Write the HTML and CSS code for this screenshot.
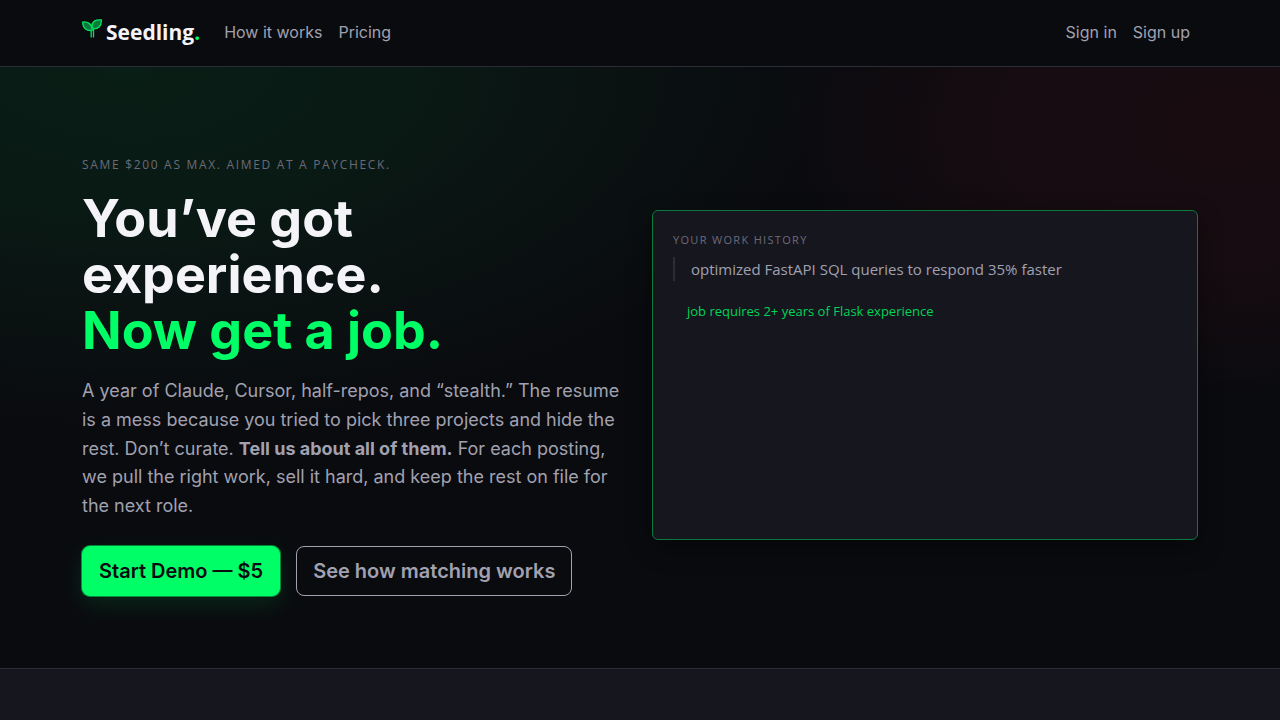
FILE: index.html
```
<!DOCTYPE html>
<html lang="en">
<head>
	<meta charset="UTF-8">
	<meta name="viewport" content="width=device-width, initial-scale=1">
	<title>Seedling</title>
	<link rel="stylesheet" href="styles.css">
</head>
<body>

<header class="navbar">
	<nav class="container nav-inner">
		<a class="brand" href="#">
			<svg class="brand-icon" width="20" height="20" viewBox="0 0 20 20" aria-hidden="true">
				<path d="M9.2 18.500V10M11.500 18.500V9" fill="none" stroke="#00e45c" stroke-width="1.3"/>
				<path d="M.7 3.100C5.400 2.300 10 4.600 10.200 11.300C5 12.300.600 9.400.700 3.100Z" fill="#0b7a3e" stroke="#00e45c" stroke-width="1.3"/>
				<path d="M19.300.9C13.600.200 9.800 2.800 10 7.200L11.300 9.900C16.300 10.300 19.700 6.800 19.300.9Z" fill="#0b7a3e" stroke="#00e45c" stroke-width="1.3"/>
			</svg>
			<span>Seedling<span class="dot">.</span></span>
		</a>
		<a class="nav-link" href="#how">How it works</a>
		<a class="nav-link" href="#pricing">Pricing</a>
		<div class="nav-right">
			<a class="nav-link" href="#signin">Sign in</a>
			<a class="nav-link" href="#signup">Sign up</a>
		</div>
	</nav>
</header>

<main>
	<section class="hero">
		<div class="container hero-grid">
			<div>
				<p class="eyebrow">Same $200 as Max. Aimed at a paycheck.</p>
				<h1>You’ve got experience. <span class="accent">Now get a job.</span></h1>
				<p class="lead">A year of Claude, Cursor, half-repos, and “stealth.” The resume is a mess because you tried to pick three projects and hide the rest. Don’t curate. <strong>Tell us about all of them.</strong> For each posting, we pull the right work, sell it hard, and keep the rest on file for the next role.</p>
				<div class="actions">
					<a class="btn btn-primary" href="#demo">Start Demo — $5</a>
					<a class="btn btn-outline" href="#how">See how matching works</a>
				</div>
			</div>
			<div class="match-card">
				<p class="card-label">Your work history</p>
				<blockquote>optimized FastAPI SQL queries to respond 35% faster</blockquote>
				<p class="requirement">job requires 2+ years of Flask experience</p>
			</div>
		</div>
	</section>
	<section class="band" id="how"></section>
</main>

</body>
</html>
```

FILE: styles.css
```
:root {
	--bg: #0a0b0f;
	--panel: #16161f;
	--line: #2a2d35;
	--text: #f4f4f8;
	--muted: #a1a1b0;
	--dim: #6b6b78;
	--green: #00ff66;
}

* {box-sizing: border-box;}

body {
	margin: 0;
	min-height: 100vh;
	display: flex;
	flex-direction: column;
	background: var(--bg);
	color: var(--muted);
	font-family: Inter, sans-serif;
	font-size: 16px;
	line-height: 24px;
}

p, h1, blockquote {margin: 0;}
a {text-decoration: none;}
main {flex: 1; display: flex; flex-direction: column;}

.container {
	width: 100%;
	max-width: 1140px;
	margin: 0 auto;
	padding: 0 12px;
}

/* top bar */
.navbar {border-bottom: 1px solid var(--line);}
.nav-inner {display: flex; align-items: center; gap: 16px; padding-top: 17px; padding-bottom: 19px;}
.brand {
	display: flex;
	align-items: center;
	gap: 4px;
	margin-right: 8px;
	color: var(--text);
	font: 700 21px/30px "Open Sans", sans-serif;
}
.brand-icon {margin-bottom: 6px;}
.dot, .accent {color: var(--green);}
.nav-link {color: var(--muted);}
.nav-right {display: flex; gap: 16px; margin-left: auto; padding-right: 8px;}

/* hero */
.hero {
	padding: 87px 0 72px;
	background:
		radial-gradient(ellipse 55% 60% at 10% 0%, rgba(0, 255, 102, 0.08), rgba(0, 255, 102, 0.06) 40%, transparent),
		radial-gradient(ellipse 35% 45% at 96% 10%, rgba(255, 30, 50, 0.06), rgba(255, 30, 50, 0.05) 50%, transparent);
}
.hero-grid {
	display: grid;
	grid-template-columns: 1fr 1fr;
	gap: 24px;
	align-items: center;
}
.eyebrow, .card-label {
	color: var(--dim);
	font-family: "Open Sans", sans-serif;
	text-transform: uppercase;
}
.eyebrow {font-size: 12px; line-height: 21px; letter-spacing: 0.14em; margin-bottom: 16px;}
h1 {
	color: var(--text);
	font-size: 52px;
	line-height: 56px;
	font-weight: 700;
	margin-bottom: 18px;
}
.accent {display: block;}
.lead {font-size: 18px; line-height: 1.6; margin-bottom: 25px;}
.actions {display: flex; gap: 16px;}
.btn {
	padding: 9px 16px;
	border: 1px solid var(--muted);
	border-radius: 8px;
	font-size: 20px;
	line-height: 30px;
	font-weight: 600;
}
.btn-primary {
	background: var(--green);
	border-color: var(--green);
	color: var(--bg);
	box-shadow: 0 0 0 1px rgba(0, 255, 102, 0.5), 0 8px 24px rgba(0, 255, 102, 0.12);
}
.btn-outline {color: var(--muted);}

/* match demo card */
.match-card {
	min-height: 330px;
	padding: 20px;
	border: 1px solid #0a7a3c;
	border-radius: 6px;
	background: var(--panel);
	box-shadow: 0 8px 24px rgba(0, 0, 0, 0.4);
	font-family: "Open Sans", sans-serif;
}
.card-label {font-size: 11px; line-height: 18px; letter-spacing: 0.12em; margin-bottom: 8px;}
.match-card blockquote {
	border-left: 2px solid var(--line);
	padding-left: 16px;
	font-size: 15px;
}
.requirement {
	margin: 18px 0 0 14px;
	color: #00d457;
	font-size: 13px;
}

.band {
	flex: 1;
	border-top: 1px solid var(--line);
	background: var(--panel);
}
```
